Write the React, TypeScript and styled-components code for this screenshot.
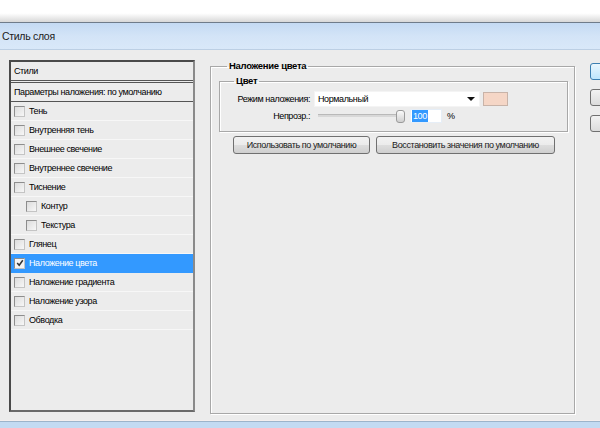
import React from 'react';
import styled, { createGlobalStyle } from 'styled-components';

const GlobalStyle = createGlobalStyle`
  html, body {
    margin: 0;
    padding: 0;
    background: #ffffff;
  }
  body {
    font-family: "Liberation Sans", Arial, sans-serif;
    font-size: 9px;
    letter-spacing: -0.4px;
    color: #000;
  }
`;

const Page = styled.div`
  width: 600px;
  height: 428px;
  overflow: hidden;
  display: flex;
  flex-direction: column;
`;

const Outside = styled.div`
  height: 22px;
  background: linear-gradient(#ffffff 0%, #ffffff 60%, #d8d8d8 100%);
  flex: none;
`;

const Window = styled.div`
  flex: 1;
  display: flex;
  flex-direction: column;
  background: #ececec;
  border-top: 1px solid #6f7c8a;
`;

const TitleBar = styled.div`
  height: 26px;
  flex: none;
  display: flex;
  align-items: center;
  padding-left: 2px;
  background: linear-gradient(#c4daf3, #d3e4f7 50%, #d9e8f9);
  border-bottom: 1px solid #bccfe4;
  font-size: 10.5px;
  letter-spacing: -0.3px;
  color: #1b1b1b;
`;

const Body = styled.div`
  flex: 1;
  display: flex;
  align-items: flex-start;
  padding: 10px 0 0 9px;
  gap: 15px;
  min-width: 0;
`;

const StylesPanel = styled.div`
  width: 182px;
  height: 348px;
  flex: none;
  border: 2px solid #5c5c5c;
  border-color: #4a4a4a #8a8a8a #6a6a6a #4a4a4a;
  display: flex;
  flex-direction: column;
`;

const PanelHead = styled.div<{ $double?: boolean }>`
  height: 18px;
  display: flex;
  align-items: center;
  padding-left: 3px;
  border-bottom: ${(p) => (p.$double ? '3px double #555' : '1px solid #555')};
`;

const PanelRow = styled.div<{ $selected?: boolean; $indent?: boolean }>`
  height: 18px;
  display: flex;
  align-items: center;
  gap: 4px;
  padding-left: ${(p) => (p.$indent ? 15 : 3)}px;
  border-bottom: 1px solid ${(p) => (p.$selected ? '#3399ff' : '#f7f7f7')};
  background: ${(p) => (p.$selected ? '#3399ff' : 'transparent')};
  color: ${(p) => (p.$selected ? '#ffffff' : '#000')};
  &:first-of-type {
    margin-top: 1px;
  }
`;

const Check = styled.span<{ $checked?: boolean }>`
  width: 9px;
  height: 9px;
  flex: none;
  border: 1px solid #a3a3a3;
  border-color: #8d8d8d #c4c4c4 #c4c4c4 #8d8d8d;
  background: ${(p) =>
    p.$checked ? '#f4f4f4' : 'linear-gradient(135deg, #dcdcdc, #f7f7f7)'};
  display: flex;
  align-items: center;
  justify-content: center;
`;

const Right = styled.div`
  display: flex;
  gap: 15px;
  align-items: flex-start;
`;

const Group = styled.fieldset<{ $inner?: boolean }>`
  margin: 0;
  border: 1px solid #a8a8a8;
  box-shadow: inset 1px 1px 0 #ffffff, 1px 1px 0 #ffffff;
  padding: ${(p) => (p.$inner ? '3px 10px 7px 10px' : '3px 8px 0 8px')};
  width: ${(p) => (p.$inner ? 349 : 365)}px;
  height: ${(p) => (p.$inner ? 'auto' : '354px')};
  box-sizing: border-box;
  min-width: 0;
`;

const Legend = styled.legend<{ $inner?: boolean }>`
  font-weight: bold;
  padding: 0 2px;
  margin-left: ${(p) => (p.$inner ? 4 : 8)}px;
  font-size: 9.5px;
  letter-spacing: -0.3px;
  line-height: 12px;
`;

const FieldRow = styled.div`
  display: flex;
  align-items: center;
  height: 17px;
`;

const Label = styled.span<{ $w: number }>`
  width: ${(p) => p.$w}px;
  flex: none;
  text-align: right;
  padding-right: 4px;
  box-sizing: border-box;
`;

const Select = styled.div`
  width: 166px;
  height: 16px;
  background: #fff;
  border: 1px solid #f4f4f4;
  display: flex;
  align-items: center;
  justify-content: space-between;
  padding: 0 4px 0 3px;
  box-sizing: border-box;
`;

const Arrow = styled.span`
  width: 0;
  height: 0;
  border-left: 4px solid transparent;
  border-right: 4px solid transparent;
  border-top: 4px solid #111;
`;

const Swatch = styled.span`
  width: 25px;
  height: 14px;
  margin-left: 3px;
  background: #f5d6c6;
  border: 1px solid #c8b3a8;
  box-sizing: border-box;
`;

const Slider = styled.div`
  position: relative;
  width: 87px;
  height: 14px;
  margin-left: 4px;
  display: flex;
  align-items: center;
  flex: none;
`;

const Track = styled.div`
  flex: 1;
  height: 2px;
  background: #d8d8d8;
  border-top: 1px solid #b9b9b9;
`;

const Thumb = styled.span`
  position: absolute;
  right: 0;
  top: 1px;
  width: 7px;
  height: 11px;
  border: 1px solid #9a9a9a;
  border-radius: 3px;
  background: linear-gradient(#fafafa, #cfcfcf);
`;

const Input = styled.div`
  width: 32px;
  height: 14px;
  margin-left: 5px;
  background: #fff;
  border: 1px solid #e6eef7;
  display: flex;
  align-items: center;
  padding-left: 1px;
  box-sizing: border-box;
`;

const Selected = styled.span`
  background: #3399ff;
  color: #fff;
  padding: 0 1px;
  line-height: 12px;
`;

const Percent = styled.span`
  margin-left: 5px;
`;

const ButtonRow = styled.div`
  display: flex;
  gap: 6px;
  margin: 4px 0 0 14px;
`;

const Btn = styled.div<{ $w: number }>`
  width: ${(p) => p.$w}px;
  height: 18px;
  box-sizing: border-box;
  border: 1px solid #707070;
  border-radius: 3px;
  background: linear-gradient(#f2f2f2 0%, #ebebeb 50%, #dddddd 51%, #cfcfcf 100%);
  display: flex;
  align-items: center;
  justify-content: center;
  color: #1a1a1a;
  white-space: nowrap;
`;

const SideButtons = styled.div`
  display: flex;
  flex-direction: column;
  gap: 9px;
  margin-top: 3px;
`;

const SideBtn = styled.div<{ $default?: boolean }>`
  width: 40px;
  height: 15px;
  border: 1px solid ${(p) => (p.$default ? '#3c7fb1' : '#707070')};
  border-radius: 3px;
  background: ${(p) =>
    p.$default ? 'linear-gradient(#eaf6fd, #bee6fd)' : 'linear-gradient(#f2f2f2, #dcdcdc)'};
`;

const BottomFrame = styled.div`
  height: 7px;
  flex: none;
  border-top: 1px solid #f4eeee;
  background: linear-gradient(#9cb3ca 0 1px, #c3daf2 1px);
`;

const items: { label: string; indent?: boolean; checked?: boolean }[] = [
  { label: 'Тень' },
  { label: 'Внутренняя тень' },
  { label: 'Внешнее свечение' },
  { label: 'Внутреннее свечение' },
  { label: 'Тиснение' },
  { label: 'Контур', indent: true },
  { label: 'Текстура', indent: true },
  { label: 'Глянец' },
  { label: 'Наложение цвета', checked: true },
  { label: 'Наложение градиента' },
  { label: 'Наложение узора' },
  { label: 'Обводка' },
];

export default function App() {
  return (
    <Page>
      <GlobalStyle />
      <Outside />
      <Window>
        <TitleBar>Стиль слоя</TitleBar>
        <Body>
          <StylesPanel>
            <PanelHead $double>Стили</PanelHead>
            <PanelHead>Параметры наложения: по умолчанию</PanelHead>
            {items.map((it) => (
              <PanelRow key={it.label} $selected={it.checked} $indent={it.indent}>
                <Check $checked={it.checked}>
                  {it.checked && (
                    <svg width="8" height="8" viewBox="0 0 8 8">
                      <path d="M1.2 4 L3.2 6.3 L6.8 1.2" stroke="#333" strokeWidth="1.5" fill="none" />
                    </svg>
                  )}
                </Check>
                {it.label}
              </PanelRow>
            ))}
          </StylesPanel>
          <Right>
            <Group>
              <Legend>Наложение цвета</Legend>
              <Group $inner>
                <Legend $inner>Цвет</Legend>
                <FieldRow>
                  <Label $w={84}>Режим наложения:</Label>
                  <Select>
                    Нормальный
                    <Arrow />
                  </Select>
                  <Swatch />
                </FieldRow>
                <FieldRow>
                  <Label $w={84}>Непрозр.:</Label>
                  <Slider>
                    <Track />
                    <Thumb />
                  </Slider>
                  <Input>
                    <Selected>100</Selected>
                  </Input>
                  <Percent>%</Percent>
                </FieldRow>
              </Group>
              <ButtonRow>
                <Btn $w={137}>Использовать по умолчанию</Btn>
                <Btn $w={179}>Восстановить значения по умолчанию</Btn>
              </ButtonRow>
            </Group>
            <SideButtons>
              <SideBtn $default />
              <SideBtn />
              <SideBtn />
            </SideButtons>
          </Right>
        </Body>
        <BottomFrame />
      </Window>
    </Page>
  );
}
